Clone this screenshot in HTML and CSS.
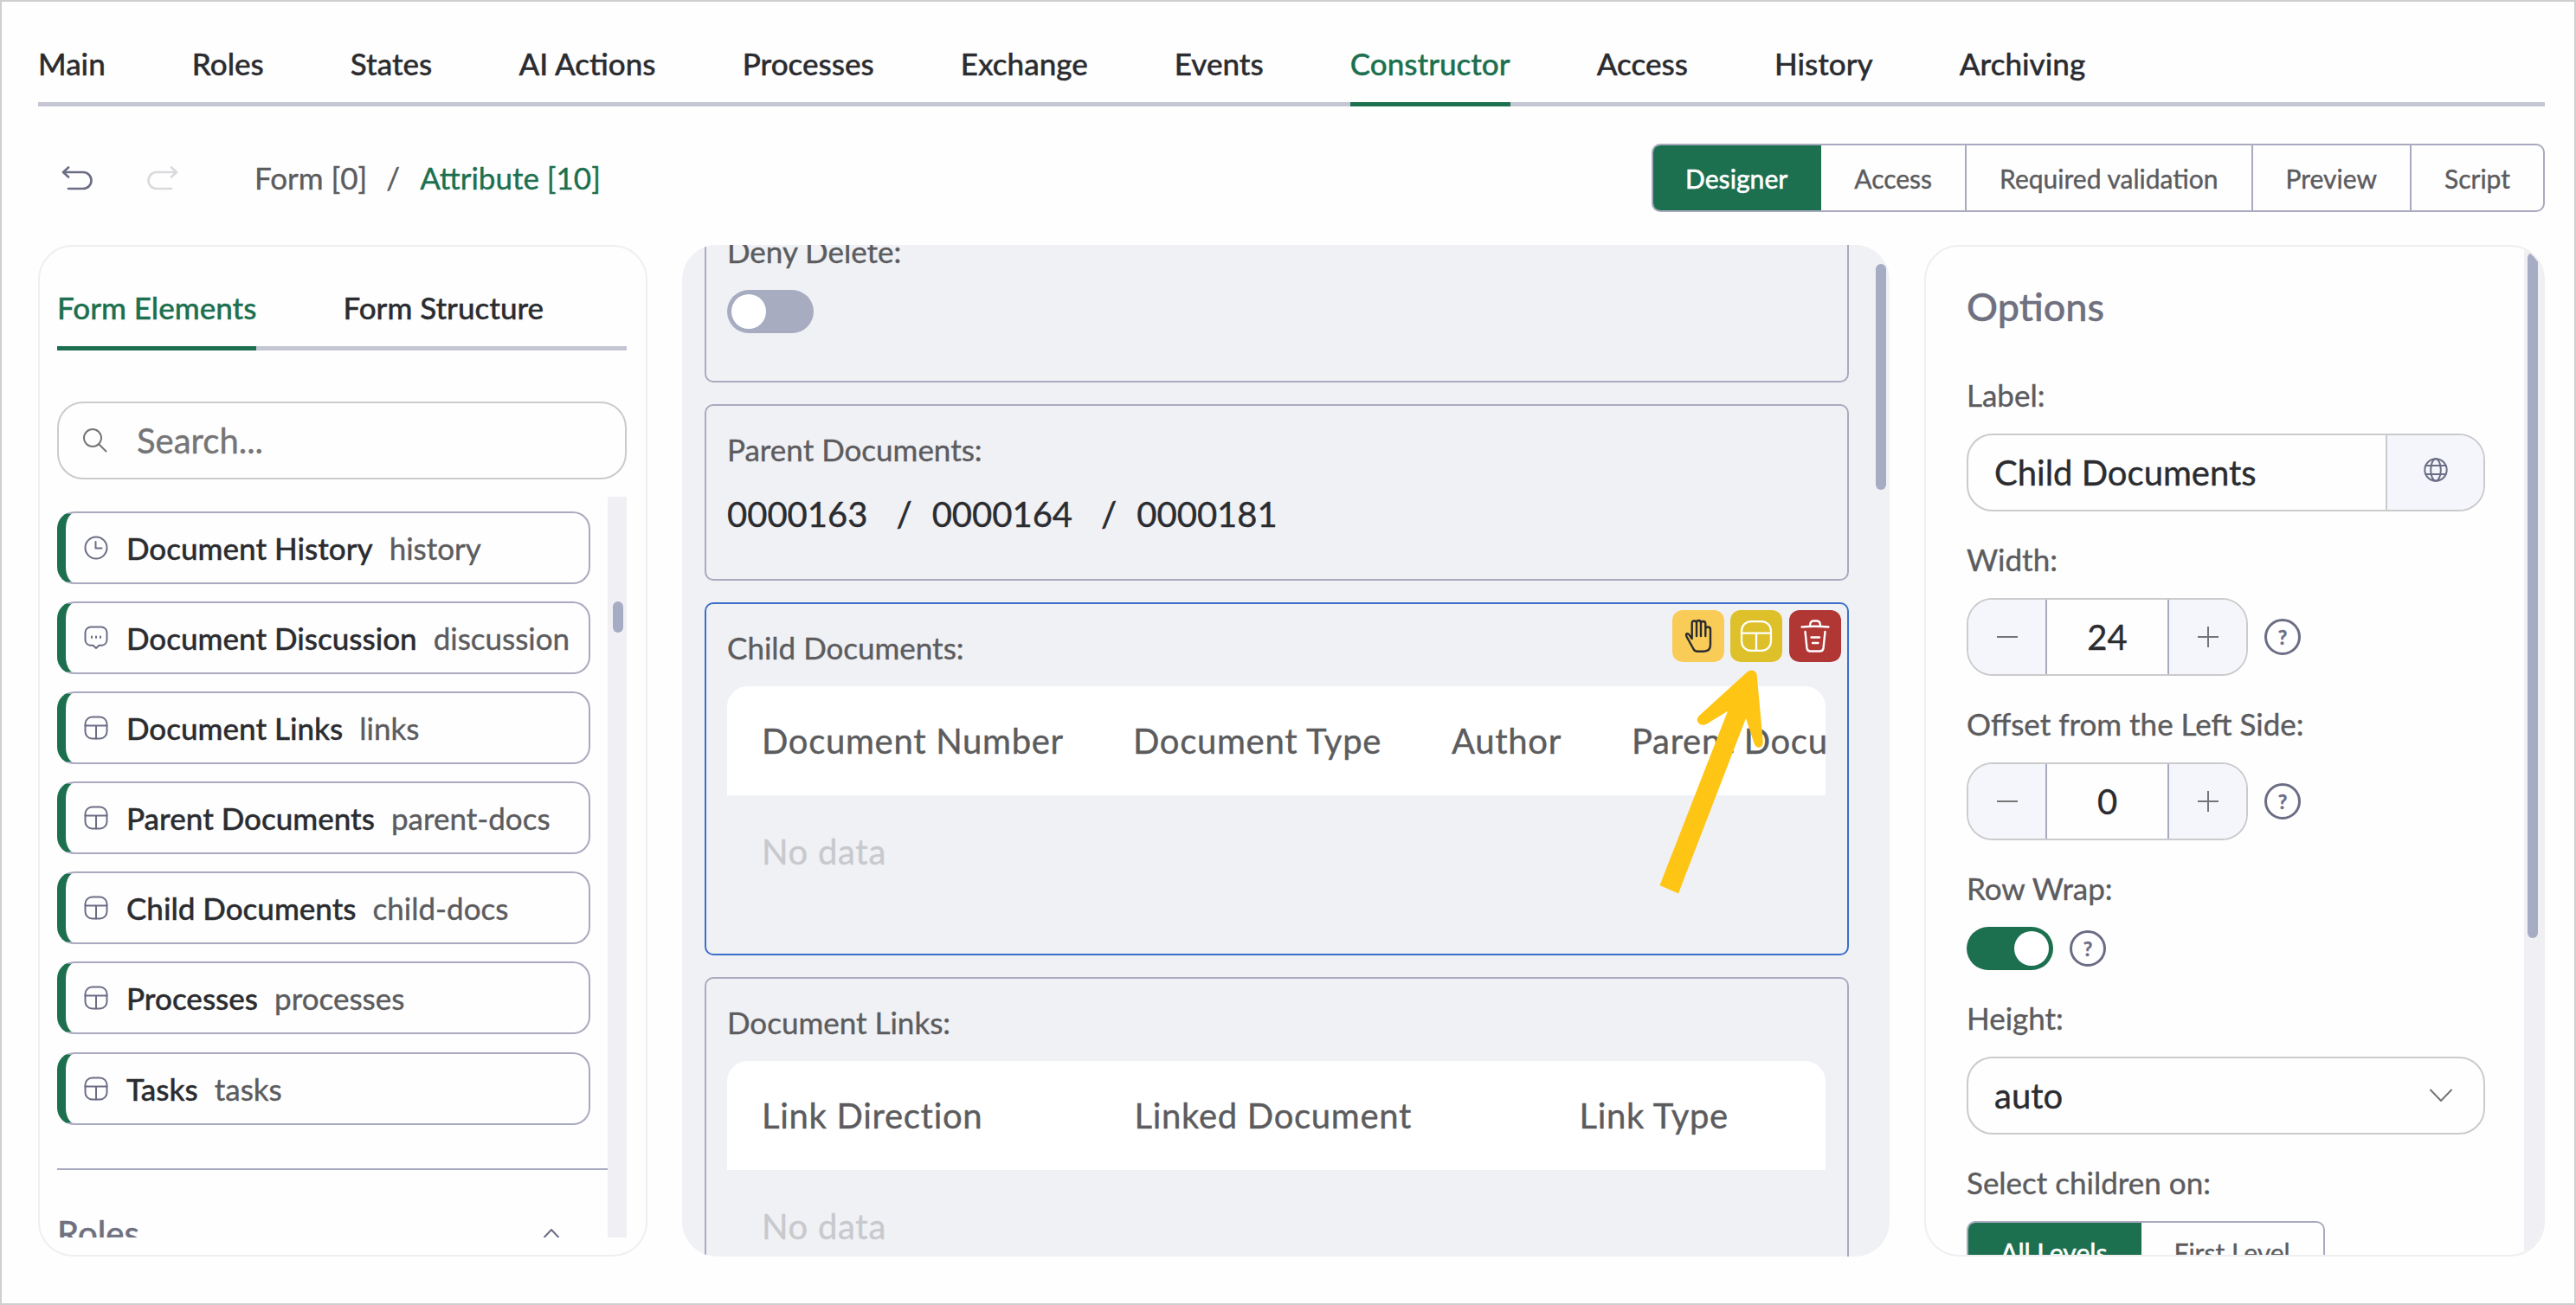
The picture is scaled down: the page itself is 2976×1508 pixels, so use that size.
FILE: index.html
```html
<!DOCTYPE html>
<html lang="en">
<head>
  <meta charset="UTF-8">
  <meta name="viewport" content="width=device-width, initial-scale=1.0">
  <title>Constructor</title>
  <link rel="stylesheet" href="styles.css">
</head>
<body>
  <!-- shared icons -->
  <svg class="sprite" width="0" height="0">
    <symbol id="icon-table" viewBox="0 0 28 28">
      <rect x="1.5" y="1.5" width="25" height="25" rx="8"/>
      <path d="M1.5 11.5h25M14 11.5v15"/>
    </symbol>
    <symbol id="icon-clock" viewBox="0 0 28 28">
      <circle cx="14" cy="14" r="12.5"/>
      <path d="M13.5 7v7.5h7"/>
    </symbol>
    <symbol id="icon-chat" viewBox="0 0 28 28">
      <path d="M8 1.5h12a6.5 6.5 0 0 1 6.5 6.5v8.500a6.500 6.500 0 0 1-5.500 6.200h-3.500l-3.500 3.300-3.500-3.300h-3.500a6.500 6.500 0 0 1-5.500-6.200v-8.500a6.500 6.500 0 0 1 6.500-6.500z"/>
      <path d="M9 12.500v1.500M14 12.500v1.500M19 12.500v1.500"/>
    </symbol>
    <symbol id="icon-minus" viewBox="0 0 24 24"><path d="M0 12h24"/></symbol>
    <symbol id="icon-plus" viewBox="0 0 24 24"><path d="M0 12h24M12 0v24"/></symbol>
  </svg>

  <nav class="main-tabs">
    <a href="#">Main</a>
    <a href="#">Roles</a>
    <a href="#">States</a>
    <a href="#">AI Actions</a>
    <a href="#">Processes</a>
    <a href="#">Exchange</a>
    <a href="#">Events</a>
    <a href="#" class="active">Constructor</a>
    <a href="#">Access</a>
    <a href="#">History</a>
    <a href="#">Archiving</a>
  </nav>

  <div class="toolbar">
    <svg class="undo" viewBox="0 0 36 28"><path d="M8 1.500L2 7l6 5.500M2.500 7H25a9.500 9.500 0 0 1 0 19H8"/></svg>
    <svg class="redo" viewBox="0 0 36 28"><path d="M28 1.500L34 7l-6 5.500M33.500 7H11a9.500 9.500 0 0 0 0 19h17"/></svg>
    <div class="breadcrumbs">
      <span>Form [0]</span>
      <span class="slash">/</span>
      <a href="#">Attribute [10]</a>
    </div>
    <div class="btn-group">
      <button class="active">Designer</button>
      <button>Access</button>
      <button>Required validation</button>
      <button>Preview</button>
      <button>Script</button>
    </div>
  </div>

  <main class="columns">
    <aside class="panel elements">
      <div class="side-tabs">
        <a href="#" class="active">Form Elements</a>
        <a href="#">Form Structure</a>
      </div>
      <div class="search">
        <svg viewBox="0 0 28 28"><circle cx="11" cy="11" r="10"/><path d="M18 18l8.500 8.500"/></svg>
        <span>Search...</span>
      </div>
      <div class="list-wrap">
        <div class="list">
          <div class="item"><svg><use href="#icon-clock"/></svg><b>Document History</b><i>history</i></div>
          <div class="item"><svg><use href="#icon-chat"/></svg><b>Document Discussion</b><i>discussion</i></div>
          <div class="item"><svg><use href="#icon-table"/></svg><b>Document Links</b><i>links</i></div>
          <div class="item"><svg><use href="#icon-table"/></svg><b>Parent Documents</b><i>parent-docs</i></div>
          <div class="item"><svg><use href="#icon-table"/></svg><b>Child Documents</b><i>child-docs</i></div>
          <div class="item"><svg><use href="#icon-table"/></svg><b>Processes</b><i>processes</i></div>
          <div class="item"><svg><use href="#icon-table"/></svg><b>Tasks</b><i>tasks</i></div>
          <div class="section-head">
            <span>Roles</span>
            <svg viewBox="0 0 18 12"><path d="M1 10.500l8-8.500 8 8.500"/></svg>
          </div>
        </div>
        <div class="track"><div class="thumb"></div></div>
      </div>
    </aside>

    <section class="canvas">
      <div class="cards">
        <div class="card">
          <div class="label">Deny Delete:</div>
          <div class="toggle"></div>
        </div>
        <div class="card">
          <div class="label">Parent Documents:</div>
          <div class="doc-path">
            <span>0000163</span><span class="slash">/</span><span>0000164</span><span class="slash">/</span><span>0000181</span>
          </div>
        </div>
        <div class="card selected">
          <div class="label">Child Documents:</div>
          <div class="table">
            <div class="row head child-cols">
              <div>Document Number</div>
              <div>Document Type</div>
              <div>Author</div>
              <div>Parent Document</div>
            </div>
            <div class="row empty">No data</div>
          </div>
          <div class="tools">
            <button class="drag">
              <svg viewBox="0 0 30 38"><path d="M7.700 22V4.500Q7.700 1.500 10.300 1.500 13 1.500 13 4V19M13 4Q13 1 15.500 1 18 1 18 4V19M18 4Q18.500 2 20.700 2 23.300 2 23.300 5V19M23.300 11Q23.500 8.500 26 8.500 29 8.500 29 11.500V29Q29 36.700 21 36.700H14.500Q10.500 36.700 9.500 34L1.700 20Q.3 17 2 16.200 3.500 15.700 5.500 19L7.700 22"/></svg>
            </button>
            <button class="columns-btn"><svg><use href="#icon-table"/></svg></button>
            <button class="remove">
              <svg viewBox="0 0 34 38"><path d="M1.500 8.500Q17 7 32.500 8.500M11 7.500Q11 1.500 15 1.500h4Q23 1.500 23 7.500M5.500 14l2 19q.5 3.500 4 3.500h11q3.500 0 4-3.500l2-19M12.500 20.500h9.500M14 27h6.500"/></svg>
            </button>
          </div>
          <svg class="arrow" viewBox="0 0 122 261"><path d="M.5 251L79 49.700 54 65Q48 67.500 44.500 62.500 42.500 58.500 45.500 55.500L101.500 4.500Q108 -.5 112.500 6.500L119.700 84Q120 91 115 91.700 110.500 91.500 109 85.500L100 58 22 260.500Z"/></svg>
        </div>
        <div class="card">
          <div class="label">Document Links:</div>
          <div class="table">
            <div class="row head link-cols">
              <div>Link Direction</div>
              <div>Linked Document</div>
              <div>Link Type</div>
            </div>
            <div class="row empty">No data</div>
          </div>
        </div>
      </div>
      <div class="track"><div class="thumb"></div></div>
    </section>

    <aside class="panel options">
      <div class="fields">
        <h2>Options</h2>
        <div class="field">
          <div class="label">Label:</div>
          <div class="input">
            <span>Child Documents</span>
            <div class="addon">
              <svg viewBox="0 0 28 28"><circle cx="14" cy="14" r="12.700"/><ellipse cx="14" cy="14" rx="5.800" ry="12.700"/><path d="M2.500 9h23M2.500 19h23"/></svg>
            </div>
          </div>
        </div>
        <div class="field">
          <div class="label">Width:</div>
          <div class="control">
            <div class="stepper"><div><svg><use href="#icon-minus"/></svg></div><span>24</span><div><svg><use href="#icon-plus"/></svg></div></div>
            <div class="help">?</div>
          </div>
        </div>
        <div class="field">
          <div class="label">Offset from the Left Side:</div>
          <div class="control">
            <div class="stepper"><div><svg><use href="#icon-minus"/></svg></div><span>0</span><div><svg><use href="#icon-plus"/></svg></div></div>
            <div class="help">?</div>
          </div>
        </div>
        <div class="field">
          <div class="label">Row Wrap:</div>
          <div class="control">
            <div class="toggle on"></div>
            <div class="help">?</div>
          </div>
        </div>
        <div class="field">
          <div class="label">Height:</div>
          <div class="input select">
            <span>auto</span>
            <svg viewBox="0 0 26 16"><path d="M1 1.500l12 12.500 12-12.500"/></svg>
          </div>
        </div>
        <div class="field">
          <div class="label">Select children on:</div>
          <div class="btn-group">
            <button class="active">All Levels</button>
            <button>First Level</button>
          </div>
        </div>
      </div>
      <div class="track"><div class="thumb"></div></div>
    </aside>
  </main>
</body>
</html>
```

FILE: styles.css
```css
* {
  box-sizing: border-box;
}

body {
  margin: 0;
  height: 1508px;
  padding: 0 34px 0 42px;
  border: 2px solid #cfcfd0;
  background: #fefefe;
  font-family: Lato, "Open Sans", sans-serif;
  font-size: 35px;
  line-height: 44px;
  color: #2b2c30;
  -webkit-text-stroke: 0.4px;
  overflow: hidden;
}

a {
  color: inherit;
  text-decoration: none;
}

button {
  margin: 0;
  padding: 0;
  border: none;
  background: none;
  font-family: inherit;
  color: inherit;
}

svg {
  display: block;
  flex: none;
  fill: none;
  stroke: #6b6d85;
  stroke-width: 2;
  stroke-linecap: round;
  stroke-linejoin: round;
}

.sprite {
  position: absolute;
}

/* top navigation */
.main-tabs {
  display: flex;
  gap: 100.1px;
  height: 121px;
  box-shadow: inset 0 -5px #c5c6d4;
}

.main-tabs a {
  padding-top: 49px;
  font-weight: 500;
}

.main-tabs .active,
.side-tabs .active {
  color: #1c704f;
  border-bottom: 5px solid #1c704f;
}

/* toolbar */
.toolbar {
  display: flex;
  align-items: center;
  height: 79px;
  margin: 43px 0 38px;
}

.undo,
.redo {
  width: 36px;
  height: 28px;
  stroke-width: 2.6;
}

.undo {
  margin-left: 27px;
}

.redo {
  margin-left: 63px;
  stroke: #d9dadd;
}

.breadcrumbs {
  display: flex;
  margin: -2px 0 0 88px;
  color: #5c5c5e;
}

.breadcrumbs .slash {
  margin: 0 23px 0 22px;
}

.breadcrumbs a {
  color: #1c704f;
}

.btn-group {
  display: flex;
  width: max-content;
  height: 79px;
  border: 2px solid #a9aabf;
  border-radius: 10px;
  overflow: hidden;
}

.toolbar .btn-group {
  margin-left: auto;
}

.btn-group button {
  padding: 0 38px;
  border-left: 2px solid #a9aabf;
  font-size: 30px;
  color: #5c5c5e;
}

.btn-group .active {
  margin: -2px 0 -2px -2px;
  padding: 0 39px;
  border: none;
  background: #1c704f;
  color: #fff;
  font-weight: 500;
}

.btn-group .active + button {
  border-left: none;
}

/* three column area */
.columns {
  display: flex;
  gap: 40px;
  height: 1169px;
}

.panel {
  border: 2px solid #efeff1;
  border-radius: 40px;
  overflow: hidden;
}

.label {
  color: #5c5c5e;
  font-size: 35px;
}

.thumb {
  width: 12px;
  border-radius: 6px;
  background: #a7acc5;
}

/* left panel */
.elements {
  width: 704px;
  padding: 0 22px 0 20px;
}

.side-tabs {
  display: flex;
  gap: 100px;
  height: 120px;
  box-shadow: inset 0 -5px #c5c6d4;
  font-weight: 500;
}

.side-tabs a {
  padding-top: 48px;
}

.search {
  display: flex;
  align-items: center;
  gap: 34px;
  height: 90px;
  margin: 59px 0 20px;
  padding-left: 28px;
  border: 2px solid #cbcbcd;
  border-radius: 30px;
  font-size: 40px;
  color: #757577;
}

.search svg {
  width: 28px;
  height: 28px;
  stroke: #757577;
}

.list-wrap {
  display: flex;
  height: 856px;
  overflow: hidden;
}

.list {
  width: 636px;
  padding-top: 17px;
}

.item {
  display: flex;
  align-items: center;
  width: 616px;
  height: 84px;
  margin-bottom: 20.1px;
  padding-left: 21px;
  border: 2px solid #a9aabf;
  border-left: 10px solid #1c704f;
  border-radius: 20px;
}

.item svg {
  width: 28px;
  height: 28px;
}

.item b {
  margin: 0 19px 0 21px;
  font-weight: 500;
}

.item i {
  font-style: normal;
  color: #5c5c5e;
}

.section-head {
  display: flex;
  justify-content: space-between;
  align-items: center;
  height: 149px;
  margin-top: 50px;
  padding-right: 56px;
  border-top: 2px solid #a9aabf;
  font-size: 40px;
  font-weight: 500;
  color: #6f7080;
}

.section-head svg {
  width: 18px;
  height: 12px;
}

.elements .track {
  width: 22px;
  padding: 121px 0 0 6px;
  background: #f0f0f4;
}

.elements .thumb {
  height: 36px;
}

/* form canvas */
.canvas {
  display: flex;
  width: 1395px;
  padding-left: 26px;
  background: #f0f1f5;
  border-radius: 40px;
  overflow: hidden;
}

.cards {
  display: flex;
  flex-direction: column;
  gap: 25px;
  width: 1322px;
  margin-top: -45px;
}

.card {
  position: relative;
  flex: none;
  height: 204px;
  padding: 28px 24px 0;
  border: 2px solid #a9aabf;
  border-radius: 10px;
}

.card.selected {
  border-color: #3c6fc8;
  height: 408px;
}

.card:last-child {
  height: 408px;
}

.canvas .track {
  padding: 22px 0 0 31px;
}

.canvas .thumb {
  height: 261px;
}

.toggle {
  width: 100px;
  height: 50px;
  padding: 5px;
  border-radius: 25px;
  background: #a7acc1;
}

.toggle::before {
  content: "";
  display: block;
  width: 40px;
  height: 40px;
  border-radius: 50%;
  background: #fff;
}

.toggle.on {
  background: #1c704f;
}

.toggle.on::before {
  margin-left: auto;
}

.card .toggle,
.card .table {
  margin-top: 23px;
}

.doc-path {
  display: flex;
  margin-top: 29px;
  font-size: 40px;
  line-height: 48px;
}

.doc-path .slash {
  margin: 0 23px 0 33px;
  font-weight: 500;
}

.table {
  width: 1269px;
  overflow: hidden;
  font-size: 40px;
}

.row {
  padding-left: 40px;
  line-height: 126px;
  white-space: nowrap;
  letter-spacing: 0.7px;
}

.row.head {
  display: grid;
  border-radius: 24px 24px 0 0;
  background: #fff;
  color: #5c5c5e;
  overflow: hidden;
}

.child-cols {
  grid-template-columns: 429px 368px 208px 400px;
}

.link-cols {
  grid-template-columns: 430.5px 514px 300px;
}

.row.empty {
  line-height: 130px;
  color: #c8c9cd;
}

.tools {
  position: absolute;
  top: 7px;
  right: 7px;
  display: flex;
  gap: 7px;
}

.tools button {
  display: flex;
  align-items: center;
  justify-content: center;
  width: 60px;
  height: 60px;
  border-radius: 12px;
}

.tools svg {
  width: 38px;
  height: 38px;
  stroke: #fff;
  stroke-width: 2.4;
}

.tools .drag {
  background: #f9cb57;
}

.tools .drag svg {
  width: 30px;
  overflow: visible;
  stroke: #2b2c30;
}

.tools .columns-btn {
  margin-right: 1px;
  background: #dec02a;
}

.tools .columns-btn svg {
  stroke-width: 1.7;
}

.tools .remove {
  background: #b03734;
}

.tools .remove svg {
  width: 34px;
}

.arrow {
  position: absolute;
  left: 1101px;
  top: 74px;
  width: 122px;
  height: 261px;
  stroke: none;
  fill: #fec514;
}

/* options panel */
.options {
  display: flex;
  justify-content: space-between;
  width: 717px;
}

.fields {
  width: 646px;
  padding: 42px 0 0 47px;
}

.options h2 {
  margin: 0 0 53px;
  font-size: 45px;
  line-height: 54px;
  font-weight: 500;
  color: #6f7080;
}

.field {
  margin-bottom: 33px;
}

.field .label {
  margin-bottom: 23px;
}

.field .btn-group {
  height: 72px;
}

.input {
  display: flex;
  align-items: center;
  justify-content: space-between;
  height: 90px;
  padding-left: 30px;
  border: 2px solid #cbcbcd;
  border-radius: 30px;
  font-size: 40px;
  overflow: hidden;
}

.addon {
  display: flex;
  align-items: center;
  justify-content: center;
  width: 113px;
  height: 100%;
  padding-bottom: 6px;
  border-left: 2px solid #cbcbcd;
  background: #f4f6fb;
}

.addon svg {
  width: 28px;
  height: 28px;
}

.select {
  padding-right: 36px;
}

.select svg {
  width: 26px;
  height: 16px;
  stroke: #757577;
}

.control {
  display: flex;
  align-items: center;
  gap: 19px;
}

.stepper {
  display: flex;
  width: 325px;
  height: 90px;
  border: 2px solid #cbcbcd;
  border-radius: 30px;
  overflow: hidden;
  font-size: 40px;
  line-height: 86px;
  text-align: center;
}

.stepper div {
  display: flex;
  align-items: center;
  justify-content: center;
  width: 89px;
  background: #f4f6fb;
}

.stepper svg {
  width: 24px;
  height: 24px;
  stroke: #757577;
}

.stepper span {
  flex: 1;
  border: solid #a9aabf;
  border-width: 0 2px;
}

.help {
  width: 42px;
  height: 42px;
  border: 3px solid #6b6d85;
  border-radius: 50%;
  font-size: 23px;
  font-weight: 700;
  line-height: 36px;
  text-align: center;
  color: #6b6d85;
}

.options .track {
  width: 22px;
  padding: 7px 0 0 4px;
  background: #f0f0f4;
}

.options .thumb {
  height: 792px;
}
```
